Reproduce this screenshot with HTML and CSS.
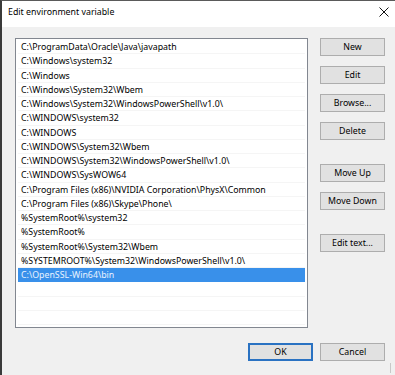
FILE: index.html
```html
<!DOCTYPE html>
<html lang="en">
<head>
    <meta charset="UTF-8">
    <meta name="viewport" content="width=device-width, initial-scale=1.0">
    <title>Edit environment variable</title>
    <link rel="stylesheet" href="styles.css">
</head>
<body>
    <div class="dialog">
        <div class="titlebar">
            <span class="title">Edit environment variable</span>
            <svg class="close" width="10" height="10" viewBox="0 0 10 10">
                <path d="M0.5 0.5 L9.5 9.5 M9.5 0.5 L0.5 9.5" stroke="#111" stroke-width="1" fill="none"/>
            </svg>
        </div>
        <div class="content">
            <div class="main">
                <ul class="list" id="list"></ul>
                <div class="side">
                    <button class="btn">New</button>
                    <button class="btn">Edit</button>
                    <button class="btn">Browse...</button>
                    <button class="btn">Delete</button>
                    <button class="btn group">Move Up</button>
                    <button class="btn">Move Down</button>
                    <button class="btn group">Edit text...</button>
                </div>
            </div>
            <div class="footer">
                <button class="btn default">OK</button>
                <button class="btn">Cancel</button>
            </div>
        </div>
        <div class="grip"></div>
    </div>
    <script>
        const paths = [
            "C:\\ProgramData\\Oracle\\Java\\javapath",
            "C:\\Windows\\system32",
            "C:\\Windows",
            "C:\\Windows\\System32\\Wbem",
            "C:\\Windows\\System32\\WindowsPowerShell\\v1.0\\",
            "C:\\WINDOWS\\system32",
            "C:\\WINDOWS",
            "C:\\WINDOWS\\System32\\Wbem",
            "C:\\WINDOWS\\System32\\WindowsPowerShell\\v1.0\\",
            "C:\\WINDOWS\\SysWOW64",
            "C:\\Program Files (x86)\\NVIDIA Corporation\\PhysX\\Common",
            "C:\\Program Files (x86)\\Skype\\Phone\\",
            "%SystemRoot%\\system32",
            "%SystemRoot%",
            "%SystemRoot%\\System32\\Wbem",
            "%SYSTEMROOT%\\System32\\WindowsPowerShell\\v1.0\\",
            "C:\\OpenSSL-Win64\\bin"
        ];
        const list = document.getElementById("list");
        paths.forEach((p, i) => {
            const li = document.createElement("li");
            li.textContent = p;
            if (i === paths.length - 1) li.className = "selected";
            list.appendChild(li);
        });
        // empty rows below the items
        for (let i = 0; i < 3; i++) {
            const li = document.createElement("li");
            li.className = "empty";
            list.appendChild(li);
        }
    </script>
</body>
</html>
```

FILE: styles.css
```css
html, body {
    margin: 0;
    padding: 0;
}
body {
    font-family: "Noto Sans", "Open Sans", sans-serif;
    font-size: 8.8px;
    color: #000;
    background: #f0f0f0;
}
.dialog {
    position: relative;
    width: 393px;
    height: 374px;
    border-left: 2px solid #3a3a3a;
    border-top: 1px solid #5a5a5a;
    background: #f0f0f0;
    overflow: hidden;
}
.titlebar {
    height: 26px;
    background: #fff;
    display: flex;
    align-items: center;
    justify-content: space-between;
    padding: 0 6px 0 6px;
}
.title {
    font-size: 8.8px;
    margin-top: -5px;
}
.close {
    margin-top: -5px;
}
.content {
    padding: 11px 10px 0 13px;
}
.main {
    display: flex;
    gap: 12px;
}
.list {
    list-style: none;
    margin: 0;
    width: 287px;
    height: 287px;
    padding: 1px 2px 0 2px;
    border: 1px solid #828790;
    background: #fff;
    overflow: hidden;
}
.list li {
    height: 14.25px;
    line-height: 14.25px;
    padding-left: 3px;
    white-space: nowrap;
    overflow: hidden;
    box-shadow: inset 0 -1px 0 #f5f5f5;
}
.list li.selected {
    background: #3990ea;
    color: #eaf3ff;
    box-shadow: none;
}
.side {
    display: flex;
    flex-direction: column;
    gap: 10px;
}
.btn {
    width: 65px;
    height: 18px;
    padding: 0;
    border: 1px solid #adadad;
    background: #e1e1e1;
    font-family: "Noto Sans", "Open Sans", sans-serif;
    font-size: 8.8px;
    line-height: 14px;
    color: #000;
}
.btn.group {
    margin-top: 14px;
}
.footer {
    display: flex;
    justify-content: flex-end;
    gap: 7px;
    margin-top: 15px;
}
.btn.default {
    border-color: #2a72c2;
    box-shadow: inset 0 0 0 1px #2a72c2;
}
.grip {
    position: absolute;
    right: 0;
    bottom: 2px;
    width: 4px;
    height: 10px;
    border-left: 1px solid #c8c8c8;
}
```
